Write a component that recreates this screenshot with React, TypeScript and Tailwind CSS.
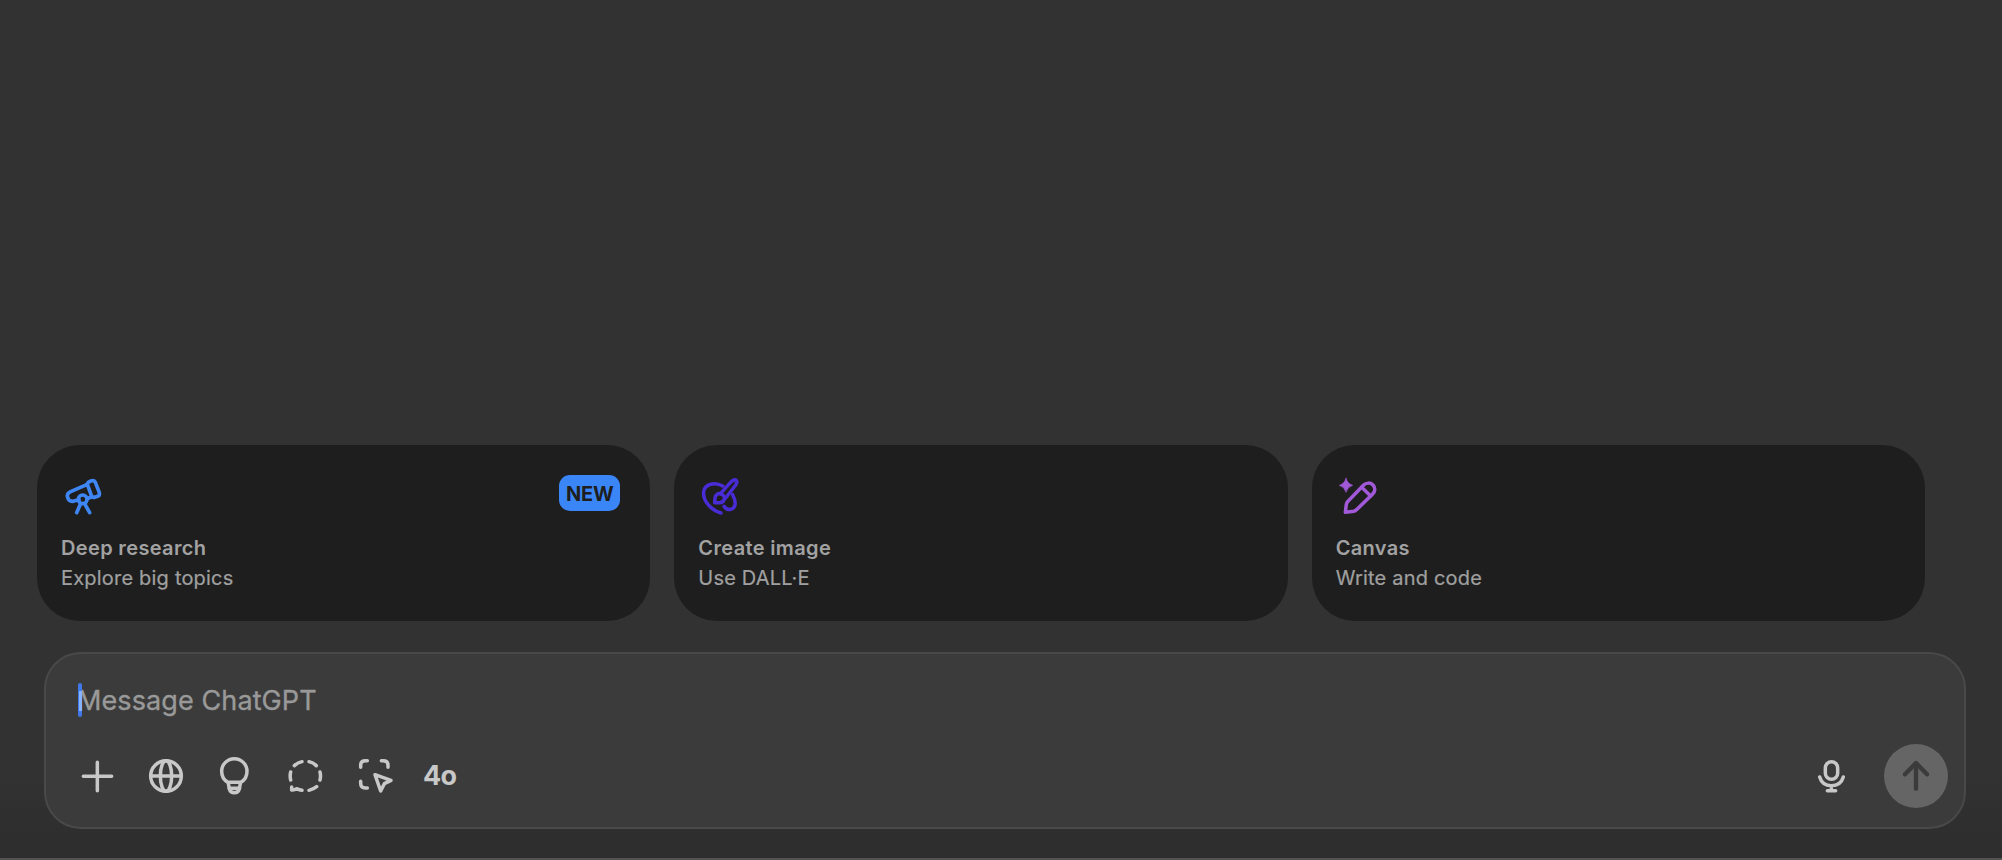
import React from "react";
import clsx from "clsx";

interface IconProps {
  className?: string;
  strokeWidth?: number;
  children: React.ReactNode;
}

const Icon: React.FC<IconProps> = ({ className, strokeWidth = 10.5, children }) => (
  <svg
    viewBox="0 0 108 108"
    className={clsx("size-9 shrink-0 overflow-visible", className)}
    fill="none"
    stroke="currentColor"
    strokeWidth={strokeWidth}
    strokeLinecap="round"
    strokeLinejoin="round"
  >
    {children}
  </svg>
);

const TelescopeIcon = () => (
  <Icon className="text-[#3f86f5]" strokeWidth={11}>
    <path d="M67 19 L17 41 Q4 47 8 58 Q11 71 24 70 L42 65" />
    <path d="M66 62 L79 57" />
    <path d="M67 19 Q68 13 76 10 L81 8 Q88 6 91 13 L103 44 Q105 53 98 55 L89 58 Q81 59 79 52 L67 19" />
    <circle cx="53" cy="64" r="13" />
    <path d="M46 79 L35 104 M60 79 L74 104" />
  </Icon>
);

const BrushIcon = () => (
  <Icon className="text-[#4a2cd6]" strokeWidth={10.5}>
    <path d="M57 105 C28 97 2 70 5 41 C8 17 40 11 62 24" />
    <path d="M92 50 C98 62 101 73 99 81 C95 97 76 100 66 85" />
    <path d="M55 47 L88 11 Q97 3 103 7 Q107 12 101 21 L71 60" />
    <path d="M38 74 L39 60 C40 51 47 46 54 47 C63 49 69 55 67 63 C65 71 59 74 52 74 Z" />
  </Icon>
);

const CanvasIcon = () => (
  <Icon className="text-[#a259d9]" strokeWidth={10.5}>
    <path
      d="M18 1 Q22 17 38 22 Q22 27 18 43 Q14 27 -2 22 Q14 17 18 1 Z"
      fill="currentColor"
      strokeWidth={2}
    />
    <path d="M16 103 L19 79 Q20 74 24 70 L71 21 C78 14 91 13 99 21 C107 30 105 41 98 48 L51 94 Q46 99 41 100 Z" />
    <path d="M65 28 L92 54" />
  </Icon>
);

interface FeatureCardProps {
  icon: React.ReactNode;
  title: string;
  description: string;
  isNew?: boolean;
}

const FeatureCard: React.FC<FeatureCardProps> = ({ icon, title, description, isNew }) => (
  <div className="h-[176px] rounded-[43px] bg-[#1e1e1e] pl-6 pr-[30px] pt-[30px]">
    <div className="flex h-[58px] items-start justify-between">
      <div className="pl-1 pt-[3px]">{icon}</div>
      {isNew && (
        <span className="flex h-9 w-[61px] items-center justify-center rounded-[11px] bg-[#3b86f7] pt-px text-[20px] font-bold tracking-[-0.2px] text-[#1e1e1e]">
          NEW
        </span>
      )}
    </div>
    <h3 className="text-[20px] font-semibold leading-[30px] tracking-[0.35px] text-[#a2a2a2]">{title}</h3>
    <p className="text-[20px] leading-[30px] tracking-[0.2px] text-[#a0a0a0] [-webkit-text-stroke:0.2px]">
      {description}
    </p>
  </div>
);

const Composer = () => (
  <div className="ml-11 mr-9 h-[177px] rounded-[37px] border-2 border-[#494949] bg-[#3b3b3b] pt-[29px]">
    <div className="relative flex h-[34px] items-center pl-[31px] pt-[2px] text-[27px] tracking-[0.1px] text-[#999] [-webkit-text-stroke:0.35px]">
      <span>Message ChatGPT</span>
      <span className="absolute left-8 top-0 h-[34px] w-1 rounded-sm bg-[#3f78e8]" />
      <span className="absolute left-[33px] top-2 h-5 w-[3px] bg-[#86b3fb]" />
    </div>
    <div className="mt-[27px] flex h-16 items-center justify-between pl-[34px] pr-4 text-[#c8c8c8]">
      <div className="flex items-center">
        <Icon>
          <path d="M10 55 H95 M52 13 V98" />
        </Icon>
        <Icon className="ml-8">
          <circle cx="54" cy="54" r="46" />
          <ellipse cx="54" cy="54" rx="17" ry="46" />
          <path d="M8 54 H100" />
        </Icon>
        <Icon className="ml-8">
          <path d="M36 73 C24 67 17 54 17 40 A38 38 0 0 1 93 40 C93 54 86 67 74 73 Z" />
          <path d="M37 76 L40 93 Q43 104 55 104 Q67 104 70 93 L73 76" />
          <path d="M40 91 H70" />
        </Icon>
        <Icon className="ml-[35px]">
          <path d="M22 23 Q32 14 45 11 M66 11 Q79 14 88 23 M99 42 Q102 54 99 66 M89 86 Q79 94 66 97 M11 42 Q8 54 11 66" />
          <path d="M14 87 V96 Q22 97 29 92 Q37 96 45 97" />
        </Icon>
        <Icon className="ml-[35px]">
          <path d="M8 28 V22 Q8 8 22 8 H28 M70 8 H76 Q90 8 90 22 V28 M8 70 V76 Q8 90 22 90 H28" />
          <path d="M51 50 L99 67 L79 77 L68 99 Z" />
        </Icon>
        <span className="ml-[29px] text-[27px] font-bold leading-9 tracking-[-0.7px]">4o</span>
      </div>
      <div className="flex items-center">
        <Icon>
          <rect x="37" y="11" width="37" height="53" rx="18.5" />
          <path d="M20 57 C25 74 38 83 55 83 S86 74 91 57 M55 83 V98 M43 98 H68" />
        </Icon>
        <div className="ml-[35px] flex size-16 items-center justify-center rounded-full bg-[#656565] text-[#3b3b3b]">
          <Icon strokeWidth={13}>
            <path d="M21 49 L54 15 L87 49 M54 16 V92" />
          </Icon>
        </div>
      </div>
    </div>
  </div>
);

const App: React.FC = () => (
  <main className="flex h-[860px] w-[2002px] flex-col justify-end overflow-hidden border-b-2 border-[#545454] bg-[#323232] bg-linear-to-b from-[#323232] from-90% to-[#2d2d2d] font-['Inter',sans-serif]">
    <div className="mb-[31px] ml-[37px] mr-[77px] grid grid-cols-3 gap-6">
      <FeatureCard icon={<TelescopeIcon />} title="Deep research" description="Explore big topics" isNew />
      <FeatureCard icon={<BrushIcon />} title="Create image" description="Use DALL·E" />
      <FeatureCard icon={<CanvasIcon />} title="Canvas" description="Write and code" />
    </div>
    <div className="mb-[29px]">
      <Composer />
    </div>
  </main>
);

export default App;
